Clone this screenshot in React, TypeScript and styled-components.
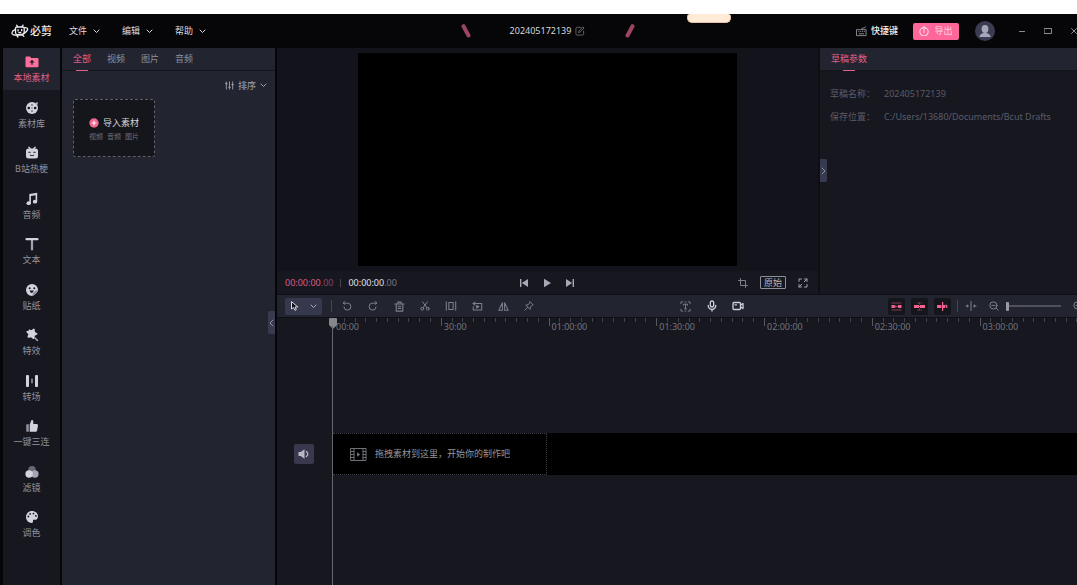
import React from "react";
import styled, { createGlobalStyle, css } from "styled-components";

const c = {
  black: "#060609",
  panel: "#22242f",
  body: "#17171f",
  stage: "#13131b",
  edge: "#0e0e14",
  pink: "#e0608a",
  hot: "#ff6699",
  icon: "#d3d3de",
  text: "#b5b6c0",
  muted: "#8f909c",
  faint: "#62636f",
  raised: "#383a50",
};

const Global = createGlobalStyle`
  * { box-sizing: border-box; }
  html, body, #root { height: 100%; }
  body {
    margin: 0;
    background: #fff;
    font-family: "Noto Sans", "Noto Sans CJK SC", sans-serif;
    font-size: 9px;
    line-height: 12px;
    color: ${c.text};
    overflow: hidden;
  }
  button {
    font: inherit;
    color: inherit;
    background: none;
    border: 0;
    margin: 0;
    padding: 0;
    display: flex;
    align-items: center;
    justify-content: center;
    white-space: nowrap;
    cursor: pointer;
  }
  svg { display: block; flex: none; }
`;

const Page = styled.div`
  min-height: 100%;
  padding-top: 14px;
  display: flex;
  overflow: hidden;
`;

const Window = styled.div`
  flex: none;
  width: calc(100% + 18px);
  display: flex;
  flex-direction: column;
  background: ${c.black};
`;

/* ---------- title bar ---------- */

const TitleBar = styled.header`
  position: relative;
  display: grid;
  grid-template-columns: 1fr auto 1fr;
  align-items: center;
  height: 34px;
  padding: 0 17px 0 11px;
`;

const MenuBar = styled.nav`
  display: flex;
  align-items: center;
`;

const Brand = styled.div`
  display: flex;
  align-items: center;
  gap: 1px;
  width: 58px;
  color: #ececf0;
  font-size: 11px;
  font-weight: 500;
`;

const MenuButton = styled.button`
  && {
    width: 53px;
    justify-content: flex-start;
    gap: 6px;
    color: #dcdce2;
  }
`;

const Project = styled.div`
  display: flex;
  align-items: center;
  justify-content: space-between;
  width: 174px;
  margin-left: 6px;
`;

const ProjectName = styled.div`
  display: flex;
  align-items: center;
  gap: 4px;
  color: #d6d8d8;
`;

const Actions = styled.div`
  display: flex;
  align-items: center;
  justify-content: flex-end;
`;

const Shortcut = styled.button`
  && {
    gap: 4px;
    margin-right: 15px;
    color: #f0f0f2;
    font-weight: 500;
  }
`;

const ExportButton = styled.button`
  && {
    gap: 5px;
    width: 46px;
    height: 17px;
    margin-right: 16px;
    border-radius: 2px;
    background: ${c.hot};
    color: #ffd5e2;
  }
`;

const Avatar = styled.button`
  && {
    width: 20px;
    height: 20px;
    border-radius: 50%;
    background: #3b3c51;
    overflow: hidden;
    margin-right: 23px;
  }
`;

const WindowControls = styled.div`
  display: flex;
  gap: 18px;
  color: #8d8e98;
`;

const Notch = styled.div`
  position: absolute;
  top: 0;
  left: 62.7%;
  width: 44px;
  height: 9px;
  border: 1px solid #e8bfa6;
  border-top: 0;
  border-radius: 3px 3px 5px 5px;
  background: #ffebd6;
`;

/* ---------- workspace ---------- */

const Workspace = styled.div`
  flex: 1;
  display: flex;
  min-height: 0;
`;

const Sidebar = styled.nav`
  display: grid;
  grid-template-rows: repeat(11, 1fr);
  width: 57px;
  margin: 0 2px 0 3px;
  padding-bottom: 36px;
  background: ${c.body};
`;

const SideItem = styled.button<{ $active?: boolean }>`
  && {
    flex-direction: column;
    gap: 3px;
    height: 42px;
    padding-top: 1px;
    color: ${(p) => (p.$active ? c.pink : "#91929c")};
    background: ${(p) => (p.$active ? c.panel : "none")};
  }
  svg {
    color: ${(p) => (p.$active ? "#ff6f9c" : c.icon)};
  }
`;

const MediaPanel = styled.section`
  position: relative;
  width: 213px;
  background: ${c.panel};
`;

const TabRow = styled.div`
  display: flex;
  gap: 16px;
  height: 23px;
  padding-left: 11px;
  border-bottom: 1px solid #15151c;
  background: ${c.panel};
`;

const Tab = styled.button<{ $active?: boolean }>`
  && {
    position: relative;
    color: ${(p) => (p.$active ? c.pink : c.muted)};
  }
  ${(p) =>
    p.$active &&
    css`
      &::after {
        content: "";
        position: absolute;
        bottom: -1px;
        left: calc(50% - 6px);
        width: 12px;
        height: 1px;
        background: ${c.pink};
      }
    `}
`;

const MediaBody = styled.div`
  display: flex;
  flex-direction: column;
  gap: 7px;
  padding: 8px 8px 0 11px;
`;

const SortButton = styled.button`
  && {
    align-self: flex-end;
    gap: 4px;
    height: 13px;
    color: #a2a3ae;
  }
`;

const ImportCard = styled.button`
  && {
    flex-direction: column;
    gap: 2px;
    width: 82px;
    height: 58px;
    padding-top: 3px;
    border: 1px dashed #5d5e6b;
    border-radius: 2px;
    background: #15151c;
    color: #d2d2d8;
  }
`;

const ImportTitle = styled.span`
  display: flex;
  align-items: center;
  gap: 4px;
`;

const ImportHint = styled.span`
  display: flex;
  gap: 4px;
  font-size: 7px;
  color: #6f707b;
`;

const Handle = styled.button<{ $side: "left" | "right" }>`
  && {
    position: absolute;
    width: 7px;
    height: 23px;
    background: ${c.raised};
    color: #8c8d9d;
    ${(p) =>
      p.$side === "right"
        ? "right: 0; top: 263px; border-radius: 2px 0 0 2px;"
        : "left: 0; top: 111px; border-radius: 0 2px 2px 0;"}
  }
`;

const MainColumn = styled.main`
  flex: 1;
  min-width: 0;
  display: flex;
  flex-direction: column;
  margin-left: 2px;
`;

const UpperRow = styled.div`
  display: flex;
  border-bottom: 1px solid ${c.edge};
`;

const Preview = styled.section`
  flex: 1;
  background: ${c.stage};
  border-right: 2px solid ${c.edge};
`;

const Stage = styled.div`
  display: flex;
  justify-content: center;
  padding: 5px 0;
`;

const Video = styled.div`
  width: 70%;
  aspect-ratio: 16 / 9;
  background: #000;
`;

const Transport = styled.div`
  display: grid;
  grid-template-columns: 1fr auto 1fr;
  align-items: center;
  height: 23px;
  padding: 0 10px 0 8px;
  background: ${c.body};
`;

const Times = styled.div`
  display: flex;
  align-items: center;
  gap: 7px;
`;

const Time = styled.span<{ $current?: boolean }>`
  color: ${(p) => (p.$current ? "#dd5b83" : "#e0e0e4")};
  small {
    font-size: 9px;
    color: ${(p) => (p.$current ? "#8f4260" : "#777883")};
  }
`;

const Divider = styled.span<{ $tall?: boolean }>`
  width: 1px;
  height: ${(p) => (p.$tall ? 12 : 8)}px;
  background: #44454f;
`;

const Playback = styled.div`
  display: flex;
  gap: 13px;
  color: #a7a8b6;
`;

const ViewTools = styled.div`
  display: flex;
  justify-content: flex-end;
  align-items: center;
  gap: 12px;
  color: #7d7e8a;
`;

const RatioButton = styled.button`
  && {
    width: 26px;
    height: 13px;
    border: 1px solid #8d8e9b;
    border-radius: 1px;
    color: #b4b5c0;
  }
`;

const Inspector = styled.section`
  position: relative;
  width: 275px;
  background: ${c.body};
`;

const Fields = styled.dl`
  display: grid;
  grid-template-columns: 54px 1fr;
  row-gap: 11px;
  margin: 0;
  padding: 17px 0 0 10px;
  color: #5b5c68;
  dd {
    margin: 0;
  }
`;

/* ---------- timeline ---------- */

const Timeline = styled.section`
  position: relative;
  flex: 1;
  display: flex;
  flex-direction: column;
  background: ${c.body};
`;

const Toolbar = styled.div`
  display: flex;
  align-items: center;
  justify-content: space-between;
  height: 23px;
  padding: 0 11px 0 8px;
  background: ${c.panel};
  border-bottom: 1px solid #0f0f16;
`;

const ToolGroup = styled.div<{ $gap: number }>`
  display: flex;
  align-items: center;
  gap: ${(p) => p.$gap}px;
`;

const PointerButton = styled.button`
  && {
    gap: 11px;
    width: 37px;
    height: 17px;
    border-radius: 2px;
    background: #36384d;
    color: #a9aab6;
  }
`;

const Tool = styled.button<{ $bright?: boolean }>`
  && {
    width: 12px;
    height: 16px;
    color: ${(p) => (p.$bright ? "#d0d1da" : "#7f808d")};
  }
`;

const Toggle = styled.button`
  && {
    width: 17px;
    height: 17px;
    border-radius: 2px;
    background: #15151c;
    color: #f0648f;
  }
`;

const Zoom = styled.input`
  appearance: none;
  width: 55px;
  height: 10px;
  margin: 0 5px 0 0;
  background: linear-gradient(#50515d, #50515d) center / 100% 2px no-repeat;
  &::-webkit-slider-thumb {
    appearance: none;
    width: 3px;
    height: 9px;
    border-radius: 1px;
    background: #9899a4;
  }
`;

const RulerRow = styled.div`
  padding-left: 56px;
  overflow: hidden;
`;

const Ruler = styled.div`
  display: grid;
  grid-template-columns: repeat(8, 1fr);
  width: calc(100% + 100px);
`;

const Segment = styled.div`
  display: grid;
  grid-template-columns: repeat(10, 1fr);
  height: 15px;
`;

const Tick = styled.i<{ $major?: boolean }>`
  grid-row: 1;
  height: ${(p) => (p.$major ? 8 : 4)}px;
  border-left: 1px solid ${(p) => (p.$major ? "#565761" : "#40414a")};
`;

const Stamp = styled.span`
  grid-row: 1;
  grid-column: 1 / -1;
  padding: 3px 0 0 3px;
  color: #74757f;
`;

const Tracks = styled.div`
  flex: 1;
  display: flex;
  flex-direction: column;
  justify-content: center;
  padding-bottom: 10px;
`;

const Track = styled.div`
  display: grid;
  grid-template-columns: 56px 1fr;
  align-items: center;
`;

const MuteButton = styled.button`
  && {
    width: 20px;
    height: 20px;
    margin-left: 17px;
    border-radius: 2px;
    background: #38394e;
    color: #b8b9c4;
  }
`;

const Lane = styled.div`
  height: 42px;
  background: #000;
`;

const DropZone = styled.div`
  display: flex;
  align-items: center;
  gap: 8px;
  width: 214px;
  height: 42px;
  padding-left: 17px;
  border: 1px dotted #3b3b40;
  border-left: 0;
  color: #94959b;
`;

const Playhead = styled.div`
  position: absolute;
  top: 23px;
  bottom: 0;
  left: 52px;
  width: 8px;
  color: #85868c;
  &::after {
    content: "";
    position: absolute;
    top: 8px;
    bottom: 0;
    left: 3px;
    width: 1px;
    background: #66676e;
  }
`;

/* ---------- icons ---------- */

type IconProps = { w?: number; h?: number; box: string; sw?: number; fill?: boolean; children: React.ReactNode };

const Icon = ({ w = 12, h = w, box, sw = 1, fill, children }: IconProps) => (
  <svg
    width={w}
    height={h}
    viewBox={box}
    fill={fill ? "currentColor" : "none"}
    stroke={fill ? "none" : "currentColor"}
    strokeWidth={sw}
    strokeLinecap="round"
    strokeLinejoin="round"
    aria-hidden="true"
  >
    {children}
  </svg>
);

const Chevron = ({ dir = "down" }: { dir?: "down" | "left" | "right" }) =>
  dir === "down" ? (
    <Icon w={7} h={5} box="0 0 7 5"><path d="M1 1l2.5 2.5L6 1" /></Icon>
  ) : (
    <Icon w={5} h={8} box="0 0 5 8"><path d={dir === "left" ? "M4 1L1 4l3 3" : "M1 1l3 3-3 3"} /></Icon>
  );

const Logo = () => (
  <Icon w={18} h={14} box="0 0 18 14" sw={1.3}>
    <path d="M4.5 4.2Q4.7 3 6 3h5.6q1.6 0 1.6 1.6v3.6q0 1.6-1.5 1.9l-5 .6q-2 0-2.2-1.8z" />
    <path d="M6.6 2.7L5.6 1.2M11 2.7l1-1.6M3.9 5.6C1.8 6.600.8 8 1 9.400c.3 1.300 2 1.800 4.300 1.800h6.200M13.600 3.700c2.200-.2 3.300.5 3 1.800-.4 1.600-2.400 3.400-4.600 4.600M6 11.800l.9 1.200M11.500 11l1.300 1.400" />
    <path d="M7 5.700v1.200M10.700 5.500v1.200M7.800 8.400q1 .7 2 0" />
  </Icon>
);

const Slash = ({ flip }: { flip?: boolean }) => (
  <svg width="10" height="14" viewBox="0 0 10 14" aria-hidden="true">
    <path d={flip ? "M7.500 2.200L2.500 11.500" : "M2.500 2.200L7.500 11.500"} stroke="#9c4460" strokeWidth="4" strokeLinecap="round" />
  </svg>
);

const navItems: { label: string; icon: React.ReactNode }[] = [
  {
    label: "本地素材",
    icon: (
      <Icon w={14} box="0 0 14 14" fill>
        <path d="M.5 2.700q0-1.200 1.200-1.200h3.300l1.200 1.400h6.100q1.200 0 1.200 1.200v7q0 1.200-1.200 1.200H1.700Q.5 12.300.5 11.100z" />
        <path d="M7 4.800L4.300 7.500h2v2.300h1.400V7.500h2z" fill="#22242f" />
      </Icon>
    ),
  },
  {
    label: "素材库",
    icon: (
      <Icon w={14} box="0 0 14 14" fill>
        <circle cx="7" cy="7" r="6" />
        <path d="M10.200 2.200L12.700.9l-.3 3z" />
        <g fill="#17171f">
          <circle cx="7" cy="3.900" r=".9" opacity=".6" /><circle cx="7" cy="10.100" r=".9" opacity=".6" />
          <circle cx="3.800" cy="7" r="1.300" /><circle cx="10.200" cy="7" r="1.300" /><circle cx="7" cy="7" r=".6" />
        </g>
      </Icon>
    ),
  },
  {
    label: "B站热梗",
    icon: (
      <Icon w={14} box="0 0 14 14" fill>
        <rect x="1" y="2.500" width="12" height="10" rx="2.500" />
        <path d="M3.800 1.300l1.500 1.500M10.200 1.300L8.700 2.800" stroke="currentColor" strokeWidth="1.300" strokeLinecap="round" />
        <path d="M3.700 6.300h1.600M8.700 6.300h1.600M5.200 9.300q1 .8 1.800 0 .8.800 1.800 0" fill="none" stroke="#17171f" strokeWidth=".9" strokeLinecap="round" />
      </Icon>
    ),
  },
  {
    label: "音频",
    icon: (
      <Icon w={14} box="0 0 14 14" fill>
        <path d="M4.300 2.100L12.200.800v8.700h-1.600V3.200L5.900 4v7.200H4.300z" />
        <ellipse cx="3.700" cy="11.200" rx="2.200" ry="1.900" /><ellipse cx="10" cy="9.700" rx="2.200" ry="1.900" />
      </Icon>
    ),
  },
  {
    label: "文本",
    icon: (
      <Icon w={14} box="0 0 14 14" sw={2.200}>
        <path d="M7 3v9.500" stroke="#a3a4b4" /><path d="M1.500 2.200h11" />
      </Icon>
    ),
  },
  {
    label: "贴纸",
    icon: (
      <Icon w={14} box="0 0 14 14" fill>
        <path d="M7 1a6 6 0 0 1 6 6c0 1.700-4.300 6-6 6A6 6 0 0 1 7 1z" />
        <path d="M13 7.200C9.500 7.400 7.600 9.500 7.200 13 9 12.800 12.800 9 13 7.200z" fill="#9091a0" />
        <g fill="#17171f"><circle cx="4.600" cy="5.300" r="1" /><circle cx="9.300" cy="5.300" r="1" /><path d="M4.600 7.600h4.200q-.5 2.300-2.100 2.300T4.600 7.600z" /></g>
      </Icon>
    ),
  },
  {
    label: "特效",
    icon: (
      <Icon w={14} box="0 0 14 14" fill>
        <path d="M4.300 2.200l2.200 1L8.900 1.400l.3 3 2.500 1.500-2.600 1.300-.5 3.100L6.300 8.400l-3 .5.900-2.900L2.100 3.800l2.700-.1z" stroke="currentColor" strokeWidth="1.600" strokeLinejoin="round" />
        <path d="M9.800 9.800l2.600 2.600" stroke="#a3a4b4" strokeWidth="1.500" strokeLinecap="round" />
      </Icon>
    ),
  },
  {
    label: "转场",
    icon: (
      <Icon w={14} box="0 0 14 14" fill>
        <rect x="1" y="1" width="3" height="12" rx="1" /><rect x="10" y="1" width="3" height="12" rx="1" />
        <rect x="6.200" y="4.500" width="1.600" height="5" rx=".8" fill="#9091a0" />
      </Icon>
    ),
  },
  {
    label: "一键三连",
    icon: (
      <Icon w={14} box="0 0 14 14" fill>
        <path d="M4.700 5.800L6.200 1.500q.3-.8 1.200-.5 1.100.5.900 2V5h3.500q1.400.2 1.200 1.500l-.9 5q-.3 1.300-1.500 1.300H4.700z" />
        <path d="M1.200 6q0-.7.700-.7h1.900v7.500H1.900q-.7 0-.7-.7z" fill="#9091a0" />
      </Icon>
    ),
  },
  {
    label: "滤镜",
    icon: (
      <Icon w={14} box="0 0 14 14" fill>
        <circle cx="7" cy="4.700" r="3.700" fill="#676876" /><circle cx="9.900" cy="9" r="3.700" fill="#a3a4b4" /><circle cx="4.100" cy="9" r="3.700" />
      </Icon>
    ),
  },
  {
    label: "调色",
    icon: (
      <Icon w={14} box="0 0 14 14" fill>
        <path d="M7 1c3.500 0 6 2.300 6 5.200 0 2.500-1.500 3.600-3 3.600H8.700c-.8 0-.7.500-.7 1.200.1 1.200-.4 1.900-1.200 1.900C3.500 12.900 1 10.300 1 7s2.500-6 6-6z" />
        <g fill="#17171f"><circle cx="3.300" cy="6.500" r=".9" /><circle cx="5.100" cy="3.900" r=".9" /><circle cx="8.500" cy="3.600" r=".9" /><circle cx="10.900" cy="5.900" r=".9" /></g>
      </Icon>
    ),
  },
];

const editTools: { label: string; icon: React.ReactNode }[] = [
  { label: "撤销", icon: <Icon w={10} box="0 0 12 12" sw={1.200}><path d="M2.800.800L1.500 2.600l1.800 1.300M1.800 2.600h4.700a4.200 4.200 0 1 1-4.200 4.700" /></Icon> },
  { label: "重做", icon: <Icon w={10} box="0 0 12 12" sw={1.200}><path d="M9.200.800l1.300 1.800-1.800 1.300M10.200 2.600H5.500a4.200 4.200 0 1 0 4.200 4.700" /></Icon> },
  { label: "删除", icon: <Icon w={11} box="0 0 12 12" sw={1.200}><path d="M1 3.200h10M4.200 3V1.200h3.600V3M2.400 3.400V11h7.200V3.400M4.500 5.700h3M4.500 8h3" /></Icon> },
  { label: "剪切", icon: <Icon w={10} box="0 0 12 12" sw={1.200}><circle cx="2.700" cy="9.300" r="1.700" /><circle cx="9.300" cy="9.300" r="1.700" /><path d="M3 1l5.300 7M9 1L3.700 8" /></Icon> },
  { label: "裁剪片段", icon: <Icon w={12} box="0 0 14 12" sw={1.200}><path d="M1.500 1v10M12.500 1v10M4.500 2h5v8h-5z" /></Icon> },
  { label: "倒放", icon: <Icon w={11} box="0 0 13 12" sw={1.200}><path d="M1 2.500h10.500V10H1.500V6M3.500.800L1.300 2.500l2.200 1.700" /><path d="M5.500 4.700v3l2.700-1.500z" fill="currentColor" /></Icon> },
  { label: "镜像", icon: <Icon w={11} box="0 0 13 12" sw={1.200}><path d="M5.200 1.500v9H1zM7.800 1.500v9H12z" /></Icon> },
  { label: "标记", icon: <Icon w={10} box="0 0 12 12" sw={1.200}><path d="M7.300 1l3.700 3.700-1.200.5-2 2.200-.6 2.600-5-5 2.600-.6 2.100-2zM4.300 7.700L1 11" /></Icon> },
];

const stamps = ["00:00", "30:00", "01:00:00", "01:30:00", "02:00:00", "02:30:00", "03:00:00", ""];

export default function App() {
  return (
    <Page>
      <Global />
      <Window>
        <TitleBar>
          <MenuBar>
            <Brand><Logo />必剪</Brand>
            {["文件", "编辑", "帮助"].map((m) => (
              <MenuButton key={m}>{m}<Chevron /></MenuButton>
            ))}
          </MenuBar>
          <Project>
            <Slash />
            <ProjectName>
              202405172139
              <button aria-label="重命名">
                <Icon w={10} box="0 0 11 11">
                  <g stroke="#686973"><path d="M6 1.500H2.500q-1.500 0-1.500 1.500v5.500Q1 10 2.500 10H8q1.500 0 1.500-1.500V5.500M4 7l.3-1.600L8.700 1l1.200 1.200-4.300 4.400z" /></g>
                </Icon>
              </button>
            </ProjectName>
            <Slash flip />
          </Project>
          <Actions>
            <Shortcut>
              <Icon w={11} box="0 0 12 12">
                <g stroke="#8f909a"><path d="M1 4h10v6.500H1zM3 6h.2M5 6h.2M7 6h.2M9 6h.2M3.500 8.500h5M6 4q0-2 2-1.800T10.500.800" /></g>
              </Icon>
              快捷键
            </Shortcut>
            <ExportButton>
              <Icon w={10} box="0 0 12 12" sw={1.300}><path d="M3.300 2.600a5 5 0 1 0 5.400 0M6 8V1M3.900 3L6 .900 8.100 3" /></Icon>
              导出
            </ExportButton>
            <Avatar aria-label="账号">
              <Icon w={20} box="0 0 20 20" fill>
                <g fill="#a5a6bb"><ellipse cx="10" cy="8" rx="3.400" ry="4" /><path d="M4.500 16c0-2.600 2.500-3.600 4-4h3c1.500.4 4 1.400 4 4z" /></g>
              </Icon>
            </Avatar>
            <WindowControls>
              <button aria-label="最小化"><Icon w={8} box="0 0 8 8"><path d="M1.500 4.500h5" /></Icon></button>
              <button aria-label="最大化"><Icon w={8} box="0 0 8 8"><path d="M.500 1.500h7v5h-7z" /></Icon></button>
              <button aria-label="关闭"><Icon w={8} box="0 0 8 8"><path d="M1.500 1.500l5 5M6.500 1.500l-5 5" /></Icon></button>
            </WindowControls>
          </Actions>
          <Notch />
        </TitleBar>

        <Workspace>
          <Sidebar>
            {navItems.map((n, i) => (
              <SideItem key={n.label} $active={i === 0}>{n.icon}{n.label}</SideItem>
            ))}
          </Sidebar>

          <MediaPanel>
            <TabRow>
              {["全部", "视频", "图片", "音频"].map((t, i) => (
                <Tab key={t} $active={i === 0}>{t}</Tab>
              ))}
            </TabRow>
            <MediaBody>
              <SortButton>
                <Icon w={9} box="0 0 10 10"><path d="M1.500 1v8M5 1v8M8.500 1v8M.500 3h2M4 7h2M7.500 4h2" /></Icon>
                排序
                <Chevron />
              </SortButton>
              <ImportCard>
                <ImportTitle>
                  <Icon w={10} box="0 0 10 10" fill>
                    <circle cx="5" cy="5" r="4.700" fill="#f0648f" /><path d="M5 3v4M3 5h4" stroke="#fff" />
                  </Icon>
                  导入素材
                </ImportTitle>
                <ImportHint><span>视频</span><span>音频</span><span>图片</span></ImportHint>
              </ImportCard>
            </MediaBody>
            <Handle $side="right" aria-label="收起素材面板"><Chevron dir="left" /></Handle>
          </MediaPanel>

          <MainColumn>
            <UpperRow>
              <Preview>
                <Stage><Video /></Stage>
                <Transport>
                  <Times>
                    <Time $current>00:00:00<small>.00</small></Time>
                    <Divider />
                    <Time>00:00:00<small>.00</small></Time>
                  </Times>
                  <Playback>
                    <button aria-label="上一帧"><Icon w={10} box="0 0 10 10" fill><path d="M1 1h1.400v8H1zM9 1v8L2.800 5z" /></Icon></button>
                    <button aria-label="播放"><Icon w={10} box="0 0 10 10" fill><path d="M2 .800L9 5 2 9.200z" /></Icon></button>
                    <button aria-label="下一帧"><Icon w={10} box="0 0 10 10" fill><path d="M9 1H7.600v8H9zM1 1v8l6.200-4z" /></Icon></button>
                  </Playback>
                  <ViewTools>
                    <button aria-label="裁剪"><Icon w={10} box="0 0 10 10"><path d="M2.500 .500v7h7M.500 2.500h7v7" /></Icon></button>
                    <RatioButton>原始</RatioButton>
                    <button aria-label="全屏"><Icon w={10} box="0 0 10 10"><g stroke="#a0a1ad"><path d="M3.500 1H1v2.500M6.500 1H9v2.500M9 6.500V9H6.500M3.500 9H1V6.500M6.200 3.800L9 1M3.800 6.200L1 9" /></g></Icon></button>
                  </ViewTools>
                </Transport>
              </Preview>
              <Inspector>
                <TabRow><Tab $active>草稿参数</Tab></TabRow>
                <Fields>
                  <dt>草稿名称：</dt><dd>202405172139</dd>
                  <dt>保存位置：</dt><dd>C:/Users/13680/Documents/Bcut Drafts</dd>
                </Fields>
                <Handle $side="left" aria-label="收起参数面板"><Chevron dir="right" /></Handle>
              </Inspector>
            </UpperRow>

            <Timeline>
              <Toolbar>
                <ToolGroup $gap={9}>
                  <PointerButton aria-label="选择工具">
                    <Icon w={9} h={10} box="0 0 9 10"><path d="M1.500 1v7l2-1.500L5 9.300l1.300-.6L5 6h2.500z" fill="#111118" stroke="#d8d8e0" /></Icon>
                    <Chevron />
                  </PointerButton>
                  <Divider $tall />
                  <ToolGroup $gap={14}>
                    {editTools.map((t) => <Tool key={t.label} aria-label={t.label}>{t.icon}</Tool>)}
                  </ToolGroup>
                </ToolGroup>

                <ToolGroup $gap={14}>
                  <Tool aria-label="识别字幕"><Icon w={11} box="0 0 12 12"><path d="M3 1H1v2M9 1h2v2M11 9v2H9M3 11H1V9M5.500 1h1M5.500 11h1M3.800 4.800V3.500h4.400v1.300M6 3.500v5M5 8.500h2" /></Icon></Tool>
                  <Tool $bright aria-label="录音"><Icon w={10} h={12} box="0 0 10 12" sw={1.300}><rect x="3.300" y="1" width="3.400" height="6" rx="1.700" /><path d="M1.200 5.500a3.800 3.800 0 0 0 7.600 0M5 9.300V11" /></Icon></Tool>
                  <Tool $bright aria-label="录屏"><Icon w={12} h={10} box="0 0 12 10" sw={1.300}><rect x="1" y="1.500" width="7.500" height="7" rx="1" /><path d="M8.500 4l2.500-1.500v5L8.500 6M3 3.800h1.500" /></Icon></Tool>
                </ToolGroup>

                <ToolGroup $gap={6}>
                  <Toggle aria-label="主轨磁吸"><Icon w={11} box="0 0 11 11" fill><path d="M.500 4h3.300v3H.500zM7 4h3.500v3H7zM4.300 4.500h.9v2h-.9zM5.600 5h1v1h-1z" /><path d="M.500 1.500h10v1H.500zM.500 8.500h10v1H.500z" opacity=".5" /></Icon></Toggle>
                  <Toggle aria-label="自动吸附"><Icon w={11} box="0 0 11 11" fill><path d="M0 4h5v3H0zM6 4h5v3H6zM5 5h1v1H5z" /><path d="M3.500 1.200h.8v1.300h-.8zM5.100 1.500h.8v2h-.8zM6.700 1.200h.8v1.300h-.8zM3.500 8.500h.8v1.300h-.8zM5.100 7.500h.8v2h-.8zM6.700 8.500h.8v1.300h-.8z" opacity=".7" /></Icon></Toggle>
                  <Toggle aria-label="联动"><Icon w={11} box="0 0 11 11" fill><path d="M0 4h4.500v3H0zM5 1h1.200v9H5zM6.200 4H8v3H6.200zM8.500 3.200l1.800 1.300v3L8.500 6z" /></Icon></Toggle>
                  <Divider $tall />
                  <ToolGroup $gap={11}>
                    <ToolGroup $gap={1}>
                      <span />
                      <Tool aria-label="预览轴"><Icon w={12} h={10} box="0 0 12 10"><path d="M6 .500v9M1 5h1.500M11 5H9.500" /><path d="M2 3.200v3.600L4 5zM10 3.200v3.600L8 5z" fill="currentColor" stroke="none" /></Icon></Tool>
                    </ToolGroup>
                    <Tool aria-label="缩小"><Icon w={10} box="0 0 12 12" sw={1.200}><circle cx="5.300" cy="5.300" r="4.300" /><path d="M8.500 8.500L11 11M3.500 5.300h3.600" /></Icon></Tool>
                  </ToolGroup>
                  <Zoom type="range" min={0} max={100} defaultValue={0} aria-label="时间轴缩放" />
                  <Tool aria-label="放大"><Icon w={10} box="0 0 12 12" sw={1.200}><circle cx="5.300" cy="5.300" r="4.300" /><path d="M8.500 8.500L11 11M3.500 5.300h3.600M5.300 3.500v3.600" /></Icon></Tool>
                </ToolGroup>
              </Toolbar>

              <RulerRow>
                <Ruler>
                  {stamps.map((s, i) => (
                    <Segment key={i}>
                      {Array.from({ length: 10 }, (_, k) => (
                        <Tick key={k} $major={k === 0} style={{ gridColumn: k + 1 }} />
                      ))}
                      <Stamp>{s}</Stamp>
                    </Segment>
                  ))}
                </Ruler>
              </RulerRow>

              <Tracks>
                <Track>
                  <MuteButton aria-label="静音">
                    <Icon w={12} h={10} box="0 0 12 10" fill>
                      <path d="M.500 3h2.200L6.500.300v9.400L2.700 7H.500z" />
                      <path d="M8.300 2.500q3 2.500 0 5" fill="none" stroke="currentColor" strokeWidth="1.300" strokeLinecap="round" />
                    </Icon>
                  </MuteButton>
                  <Lane>
                    <DropZone>
                      <Icon w={17} h={15} box="0 0 17 15">
                        <g stroke="#6f7077"><path d="M1 1.500h15v12H1zM4 1.500v12M13 1.500v12M1 4.500h3M1 7.500h3M1 10.500h3M13 4.500h3M13 7.500h3M13 10.500h3" /></g>
                        <path d="M7 5.300v4.400l3.300-2.200z" fill="#6f7077" stroke="none" />
                      </Icon>
                      拖拽素材到这里，开始你的制作吧
                    </DropZone>
                  </Lane>
                </Track>
              </Tracks>

              <Playhead>
                <Icon w={8} h={11} box="0 0 8 11" fill><path d="M0 1q0-1 1-1h6q1 0 1 1v6L4 11 0 7z" /></Icon>
              </Playhead>
            </Timeline>
          </MainColumn>
        </Workspace>
      </Window>
    </Page>
  );
}
